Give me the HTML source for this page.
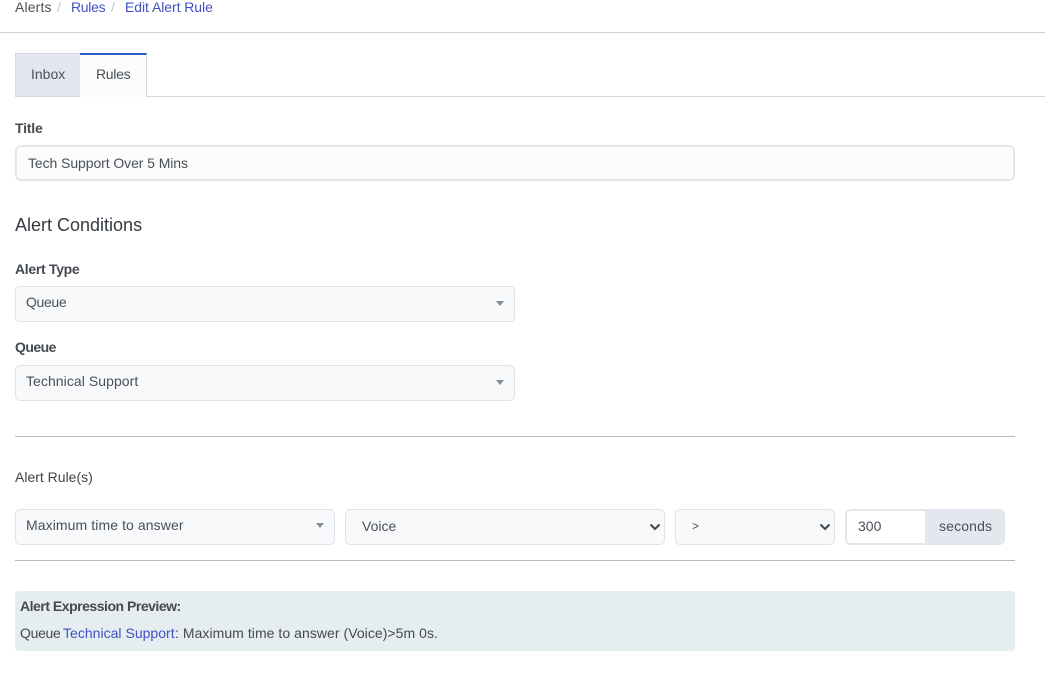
<!DOCTYPE html>
<html><head><meta charset="utf-8"><style>
html,body{margin:0;padding:0;background:#fff}
body{width:1045px;height:680px;position:relative;overflow:hidden;font-family:"Liberation Sans",sans-serif;font-size:14px;color:#495057}
.a{position:absolute;white-space:nowrap;line-height:20px}
.l{color:#3f51c4}
.b{font-weight:bold;color:#444a50;letter-spacing:-.2px}
.box{position:absolute;box-sizing:border-box;background:#f8f9fb;border:1px solid #dfe3ea;border-radius:5px}
.hr{position:absolute;height:1px;background:#b9b9b9}
.t{position:absolute;width:0;height:0;border-left:4.5px solid transparent;border-right:4.5px solid transparent;border-top:5px solid #868c93}
svg{position:absolute}
</style></head><body>
<div class="a" style="left:15px;top:-3px;letter-spacing:.15px">Alerts</div>
<div class="a" style="left:57px;top:-3px;color:#c0c4c8">/</div>
<div class="a l" style="left:71px;top:-3px;letter-spacing:-.3px">Rules</div>
<div class="a" style="left:111px;top:-3px;color:#c0c4c8">/</div>
<div class="a l" style="left:125px;top:-3px;letter-spacing:-.06px">Edit Alert Rule</div>
<div class="hr" style="left:0;top:32px;width:1045px;background:#cfcfcf"></div>

<div class="hr" style="left:146px;top:96px;width:899px;background:#d3d9e0"></div>
<div style="position:absolute;box-sizing:border-box;left:15px;top:53px;width:66px;height:44px;background:#e3e7ee;border:1px solid #d3d9e0;border-right:0"></div>
<div style="position:absolute;box-sizing:border-box;left:80px;top:53px;width:67px;height:44px;background:#fcfcfd;border-right:1px solid #d3d9e0;border-top:2px solid #2b5cc4"></div>
<div class="a" style="left:31px;top:64px">Inbox</div>
<div class="a" style="left:96px;top:64px;letter-spacing:-.3px">Rules</div>

<div class="a b" style="left:15px;top:118px">Title</div>
<div class="box" style="left:15px;top:145px;width:1000px;height:36px;background:#fcfcfd;border:2px solid #e3e6eb;border-radius:6px"></div>
<div class="a" style="left:28px;top:153px;letter-spacing:-.08px">Tech Support Over 5 Mins</div>

<div class="a" style="left:15px;top:214px;font-size:18px;line-height:22px;color:#343a40">Alert Conditions</div>

<div class="a b" style="left:15px;top:259px;letter-spacing:-.3px">Alert Type</div>
<div class="box" style="left:15px;top:286px;width:500px;height:36px"></div>
<div class="a" style="left:26px;top:292px;letter-spacing:-.35px">Queue</div>
<div class="t" style="left:496px;top:301px"></div>

<div class="a b" style="left:15px;top:337px;letter-spacing:-.55px">Queue</div>
<div class="box" style="left:15px;top:365px;width:500px;height:36px"></div>
<div class="a" style="left:26px;top:371px;letter-spacing:.06px">Technical Support</div>
<div class="t" style="left:496px;top:380px"></div>

<div class="hr" style="left:15px;top:436px;width:1000px"></div>

<div class="a" style="left:15px;top:467px;color:#3f454b">Alert Rule(s)</div>

<div class="box" style="left:15px;top:509px;width:320px;height:36px"></div>
<div class="a" style="left:26px;top:515px;letter-spacing:.09px">Maximum time to answer</div>
<div class="t" style="left:316px;top:523px"></div>

<div class="box" style="left:345px;top:509px;width:320px;height:36px"></div>
<div class="a" style="left:362px;top:516px">Voice</div>
<svg style="left:649px;top:523px" width="12" height="8" viewBox="0 0 12 8"><path d="M1.500 1.500L6 6l4.500-4.500" fill="none" stroke="#3f454b" stroke-width="2"/></svg>

<div class="box" style="left:675px;top:509px;width:160px;height:36px"></div>
<div class="a" style="left:692px;top:516px;font-size:12px">&gt;</div>
<svg style="left:819px;top:523px" width="12" height="8" viewBox="0 0 12 8"><path d="M1.500 1.500L6 6l4.500-4.500" fill="none" stroke="#3f454b" stroke-width="2"/></svg>

<div style="position:absolute;box-sizing:border-box;left:845px;top:509px;width:82px;height:36px;background:#fff;border:2px solid #e3e6eb;border-radius:6px 0 0 6px"></div>
<div style="position:absolute;box-sizing:border-box;left:926px;top:509px;width:79px;height:36px;background:#e3e7ee;border:1px solid #dfe3ea;border-left:0;border-radius:0 6px 6px 0"></div>
<div class="a" style="left:858px;top:516px">300</div>
<div class="a" style="left:939px;top:516px;letter-spacing:.15px">seconds</div>

<div class="hr" style="left:15px;top:560px;width:1000px"></div>

<div style="position:absolute;left:15px;top:591px;width:1000px;height:60px;background:#e5edf0;border-radius:4px"></div>
<div class="a b" style="left:20px;top:596px;letter-spacing:-.48px">Alert Expression Preview:</div>
<div class="a" style="left:20px;top:623px;color:#444a50;letter-spacing:-.3px">Queue</div>
<div class="a l" style="left:63px;top:623px;letter-spacing:.02px">Technical Support</div>
<div class="a" style="left:175px;top:623px;color:#444a50;letter-spacing:.05px">: Maximum time to answer (Voice)&gt;5m 0s.</div>
</body></html>
